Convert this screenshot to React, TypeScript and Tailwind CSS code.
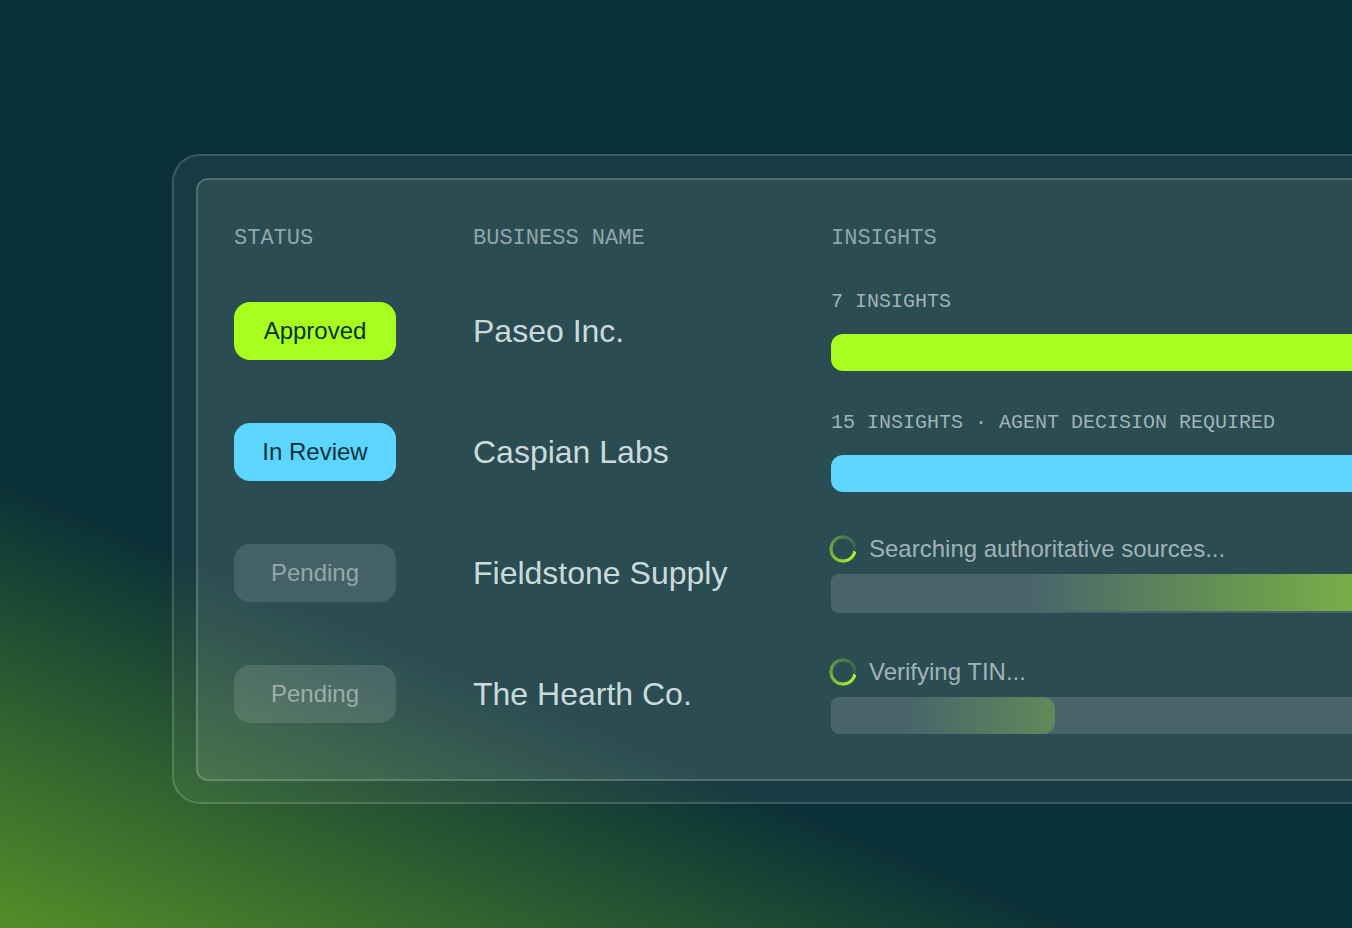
// src/App.tsx
import clsx from "clsx";

type Status = "approved" | "review" | "pending";

interface Row {
  name: string;
  status: Status;
  insight: string;
  // pending rows only, share of the track that is filled
  progress?: number;
}

const ROWS: Row[] = [
  { name: "Paseo Inc.", status: "approved", insight: "7 INSIGHTS" },
  {
    name: "Caspian Labs",
    status: "review",
    insight: "15 INSIGHTS · AGENT DECISION REQUIRED",
  },
  {
    name: "Fieldstone Supply",
    status: "pending",
    insight: "Searching authoritative sources...",
    progress: 100,
  },
  {
    name: "The Hearth Co.",
    status: "pending",
    insight: "Verifying TIN...",
    progress: 43,
  },
];

const STATUS_LABELS: Record<Status, string> = {
  approved: "Approved",
  review: "In Review",
  pending: "Pending",
};

const PILL_STYLES: Record<Status, string> = {
  approved: "bg-[#a8ff1e] text-[#0b3138]",
  review: "bg-[#5cd6ff] text-[#0b3138]",
  pending: "bg-white/12 text-white/45",
};

function StatusPill({ status }: { status: Status }) {
  return (
    <span
      className={clsx(
        "flex h-[58px] w-[162px] items-center justify-center rounded-2xl text-2xl",
        PILL_STYLES[status]
      )}
    >
      {STATUS_LABELS[status]}
    </span>
  );
}

function Spinner() {
  return (
    <span
      aria-hidden="true"
      className="-ml-0.5 size-7 shrink-0 rounded-full bg-[conic-gradient(from_102deg,#a6f52a,#98e32e_18%,#76b23a_40%,#5c9042_62%,#44704c_82%,#33594f)] [mask:radial-gradient(closest-side,transparent_72%,#000_77%,#000_95%,transparent)]"
    />
  );
}

function Insight({ row }: { row: Row }) {
  if (row.progress === undefined) {
    return (
      <div className="flex flex-col gap-[22px]">
        <span className="font-['Liberation_Mono',monospace] text-xl leading-5 whitespace-nowrap text-[#a1b3b7]">
          {row.insight}
        </span>
        <div
          className={clsx(
            "h-[37px] rounded-l-xl",
            row.status === "approved" ? "bg-[#a8ff1e]" : "bg-[#5cd6ff]"
          )}
        />
      </div>
    );
  }

  const full = row.progress === 100;

  return (
    <div className="flex flex-col gap-[11px]">
      <div className="flex items-center gap-3 text-2xl leading-7 whitespace-nowrap text-[#a1b3b7]">
        <Spinner />
        <span>{row.insight}</span>
      </div>
      <div
        role="progressbar"
        aria-label={row.insight}
        className={clsx(
          "overflow-hidden rounded-l-lg bg-white/14",
          full ? "h-[39px] pb-0.5" : "h-[37px]"
        )}
      >
        <div
          className={clsx(
            "h-full bg-linear-to-r",
            full
              ? "from-[#a8ff1e]/0 from-38% to-[#a8ff1e]/48"
              : "rounded-r-xl from-[#a8ff1e]/0 from-35% to-[#a8ff1e]/24"
          )}
          style={{ width: `${row.progress}%` }}
        />
      </div>
    </div>
  );
}

export default function App() {
  return (
    <main className="min-h-screen overflow-hidden bg-[#0b3138] bg-[linear-gradient(22.5deg,#528f28,#0b3138_30%)] pt-[154px] pb-[124px] pl-[172px] font-['Liberation_Sans',Arial,sans-serif]">
      <section className="rounded-l-[28px] border-2 border-r-0 border-white/20 bg-white/5 bg-clip-padding pt-[22px] pb-[21px] pl-[22px]">
        <div className="rounded-l-xl border-2 border-r-0 border-white/18 bg-white/9 pt-[26px] pb-[25px] pl-9">
          <table className="w-full table-fixed border-collapse text-left">
            <colgroup>
              <col className="w-[239px]" />
              <col className="w-[358px]" />
              <col />
            </colgroup>
            <thead>
              <tr className="h-16 font-['Liberation_Mono',monospace] text-[22px] text-[#91a6aa]">
                <th scope="col" className="p-0 font-normal">
                  STATUS
                </th>
                <th scope="col" className="p-0 font-normal">
                  BUSINESS NAME
                </th>
                <th scope="col" className="p-0 font-normal">
                  INSIGHTS
                </th>
              </tr>
            </thead>
            <tbody>
              {ROWS.map((row) => (
                <tr key={row.name} className="h-[121px]">
                  <td className="p-0 align-middle">
                    <StatusPill status={row.status} />
                  </td>
                  <td className="p-0 align-middle text-[32px] whitespace-nowrap text-[#cbdadb]">
                    {row.name}
                  </td>
                  <td className="p-0 pb-5 align-bottom">
                    <Insight row={row} />
                  </td>
                </tr>
              ))}
            </tbody>
          </table>
        </div>
      </section>
    </main>
  );
}
